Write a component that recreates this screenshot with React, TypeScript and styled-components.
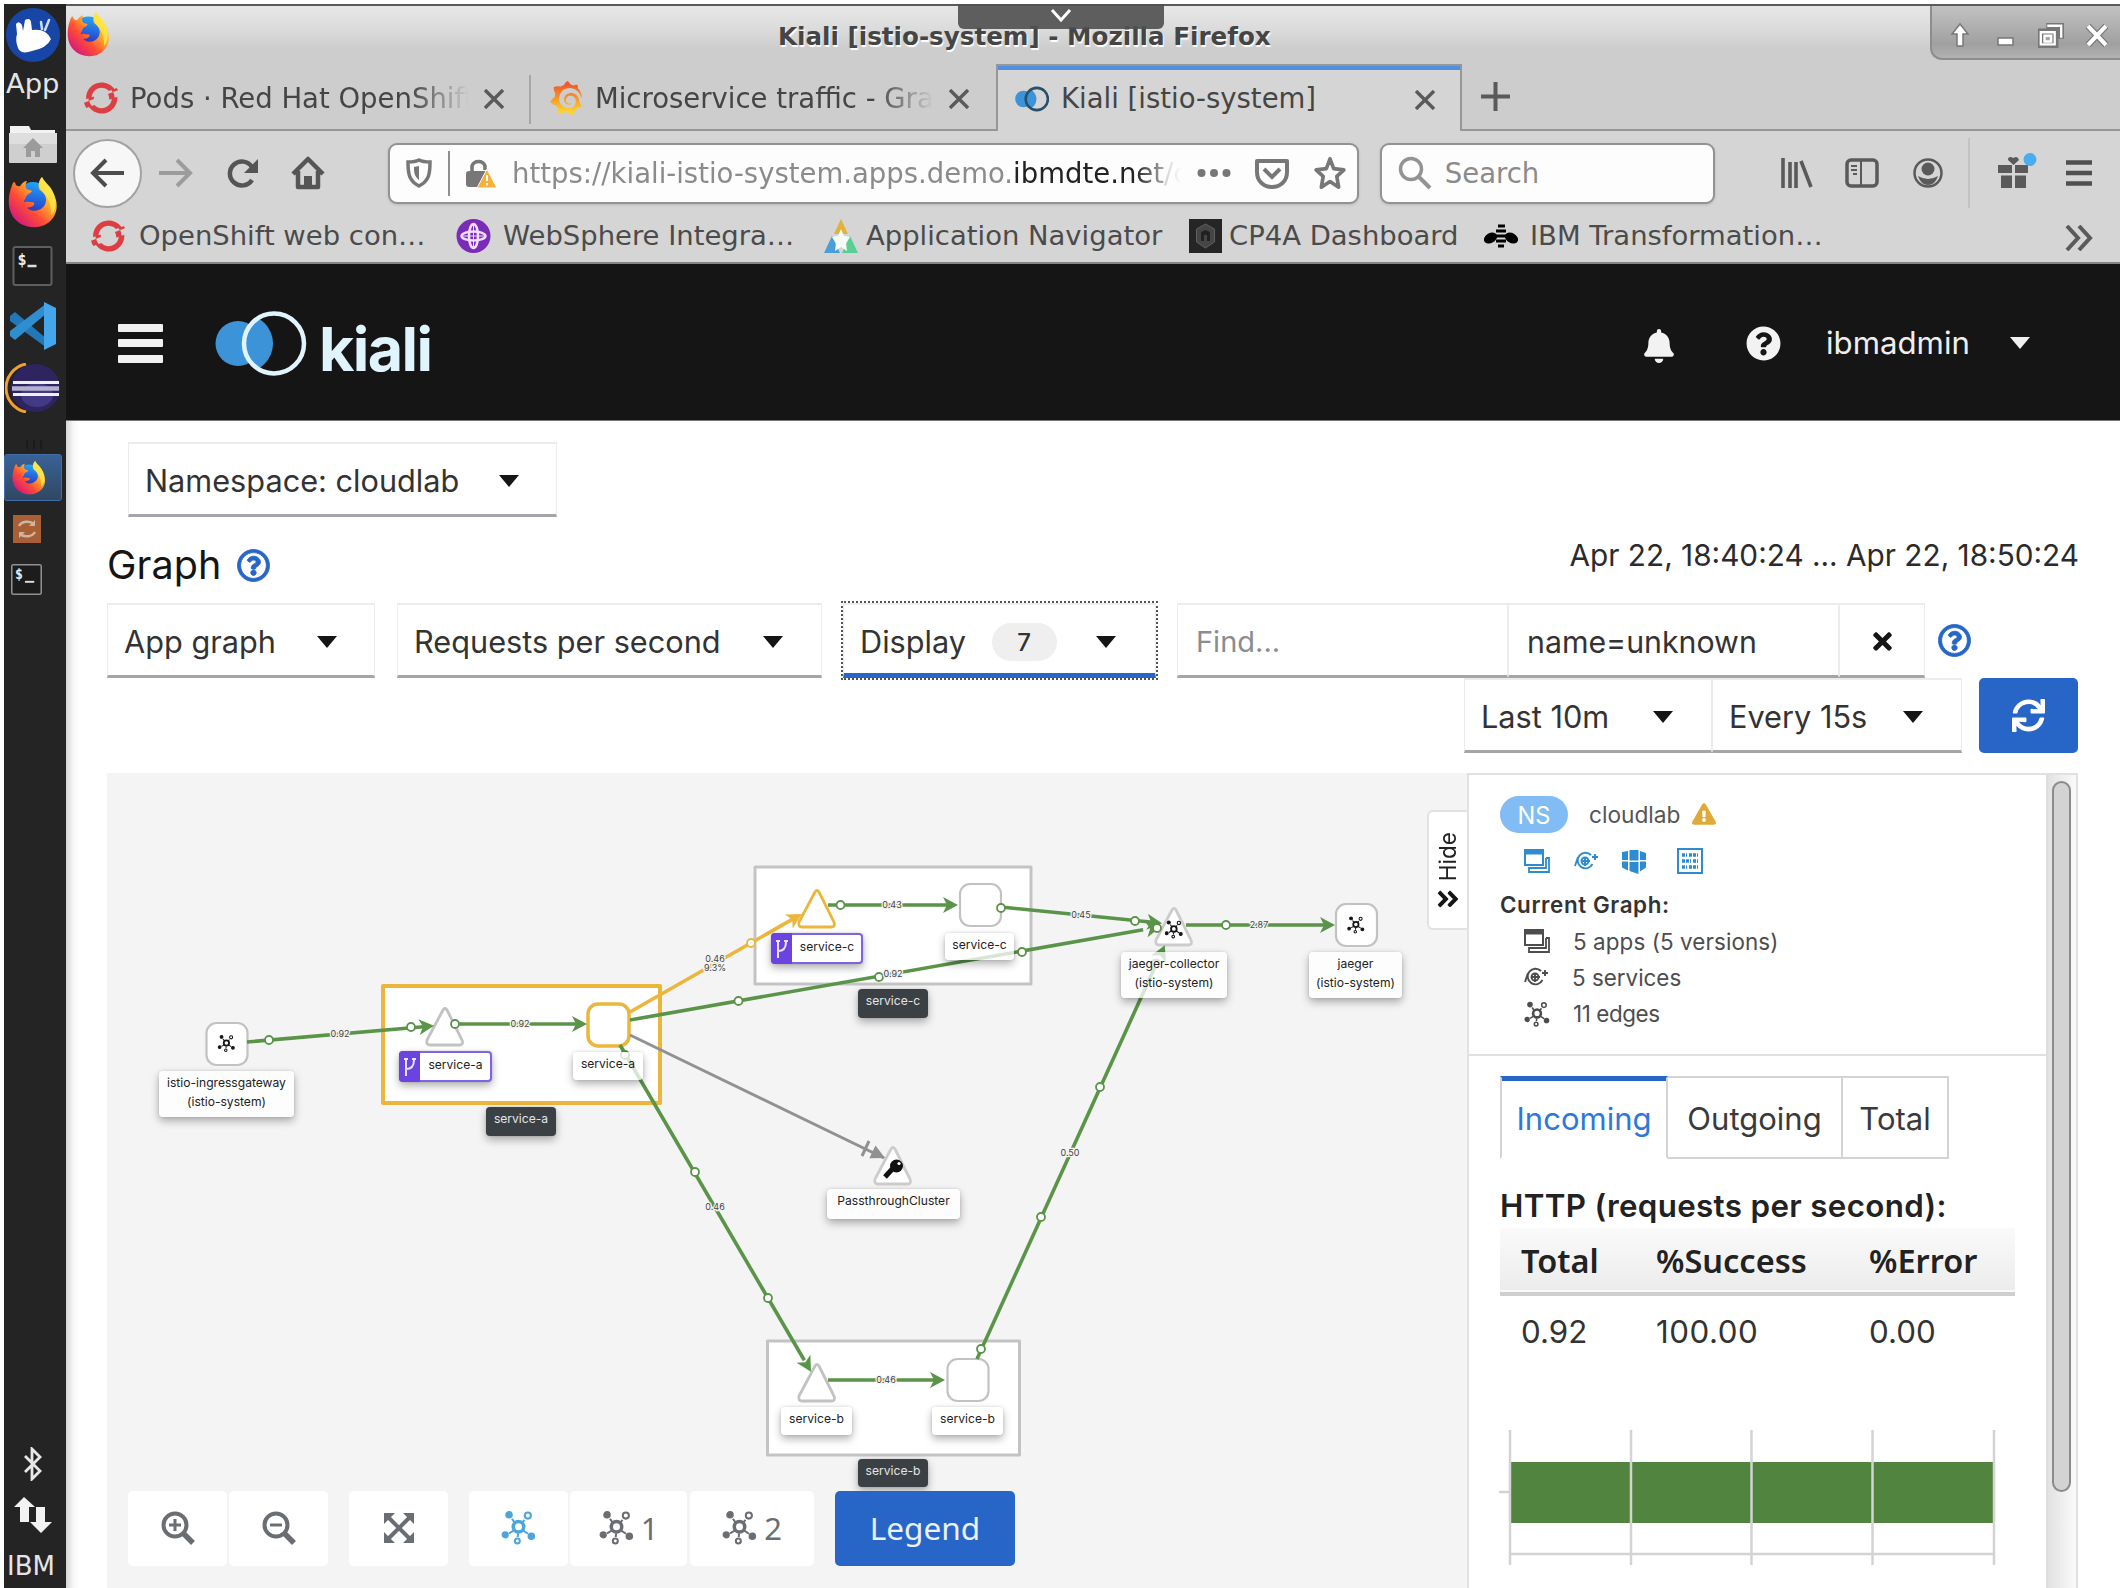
import React from "react";
import styled, { createGlobalStyle, css } from "styled-components";
import {
  FaBell, FaQuestionCircle, FaRegQuestionCircle, FaTimes, FaExclamationTriangle,
  FaAngleDoubleRight, FaSync,
} from "react-icons/fa";
import { SiRedhatopenshift, SiGrafana } from "react-icons/si";

const BROWSER_FONT = `"DejaVu Sans", "Liberation Sans", sans-serif`;
const APP_FONT = `Inter, "Noto Sans", sans-serif`;
const GREEN = "#50843f";
const GREEN_LINE = "#5a9449";
const AMBER = "#ecb53c";
const BLUE = "#2766c6";

const Global = createGlobalStyle`
  *, *::before, *::after { box-sizing: border-box; }
  body { margin: 0; background: #fff; overflow: hidden; }
  svg { display: block; flex: none; }
`;

/* ---------- desktop ---------- */
const Desktop = styled.div`
  width: 2128px; height: 1588px; padding: 4px 8px 0 4px; display: flex;
  background: #fff; overflow: hidden; font-family: ${BROWSER_FONT};
`;
const Dock = styled.nav`
  width: 62px; flex: none; background: #242424; display: flex; flex-direction: column;
  color: #e4e4e4; font-size: 27.5px;
`;
const DockItem = styled.div<{ $h: number; $gap: number; $left: number }>`
  height: ${p => p.$h}px; margin-top: ${p => p.$gap}px; padding-left: ${p => p.$left}px;
  display: flex; align-items: center; flex: none; white-space: nowrap;
`;
const ActiveTile = styled(DockItem)`
  width: 58px; border-radius: 3px; border: 1px solid #3f6ea8;
  background: linear-gradient(#3a6296, #304763);
`;
const DockSpace = styled.div`flex: 1;`;
const DockText = styled.span<{ $size: number }>`font-size: ${p => p.$size}px; line-height: 1;`;

const Window = styled.main`width: 2054px; display: flex; flex-direction: column; background: #fff;`;

/* ---------- browser chrome ---------- */
const TitleBar = styled.header`
  height: 60px; flex: none; display: flex; align-items: flex-start; position: relative;
  border-top: 2px solid #5b5b5b; background: linear-gradient(#e8e8e8, #dadada 25px, #cdcdcd 42px);
`;
const TitleIcon = styled.div`margin: 6px 0 0 1px; width: 44px;`;
const Title = styled.h1`
  margin: 16px 0 0 667px; font-size: 24.6px; line-height: 30px; font-weight: 700; color: #454545;
  text-shadow: 1px 2px 1px #fff; flex: 1; white-space: nowrap;
`;
const Controls = styled.div`
  width: 190px; height: 54px; display: flex; align-items: center; gap: 21px; padding: 5px 0 0 16px;
  background: linear-gradient(#c2c2c2, #a0a0a0 38px, #b2b2b2); border: 1px solid #8d8d8d; border-width: 0 0 2px 2px;
  border-bottom-left-radius: 12px;
`;
const Grip = styled.div`
  position: absolute; left: 892px; top: -2px; width: 206px; height: 25px; border-radius: 0 0 6px 6px;
  background: #505050e8; display: flex; justify-content: center; padding-top: 4px;
`;
const TabStrip = styled.div`
  height: 67px; flex: none; display: flex; background: #cdcdcd; box-shadow: inset 0 -2px #979797;
`;
const Tab = styled.div<{ $w: number; $pad: number; $active?: boolean; $line?: boolean }>`
  width: ${p => p.$w}px; padding-left: ${p => p.$pad}px; display: flex; align-items: center; position: relative;
  font-size: 27.5px; color: #454545; flex: none;
  ${p => p.$active && css`background: #d5d5d5; border: 2px solid #979797; border-width: 2px 2px 0 2px;
    box-shadow: inset 0 4px #4f90e0;`}
  ${p => p.$line && css`&::after { content: ""; position: absolute; right: 0; top: 11px; height: 49px; width: 2px; background: #a6a6a6; }`}
`;
const TabText = styled.span<{ $fade?: boolean; $up?: number }>`
  width: 342px; margin-left: 12px; overflow: hidden; white-space: nowrap; line-height: 36px;
  padding-bottom: ${p => p.$up || 0}px;
  ${p => p.$fade && css`mask-image: linear-gradient(90deg, #000 82%, transparent 99%);`}
`;
const TabClose = styled.span`margin-left: 12px; display: flex; padding-top: 3px;`;
const NewTab = styled.div`padding: 18px 0 0 19px;`;

const NavBar = styled.div`
  height: 84px; flex: none; display: flex; align-items: center; background: #d5d5d5; color: #5a5a5a;
`;
const BackButton = styled.div`
  width: 69px; height: 69px; margin-left: 7px; border-radius: 50%; border: 2px solid #a2a2a2; background: #f7f7f7;
  display: flex; align-items: center; justify-content: center; padding-right: 1px;
`;
const Slot = styled.div<{ $ml: number; $w: number }>`
  margin-left: ${p => p.$ml}px; width: ${p => p.$w}px; display: flex; justify-content: center; flex: none;
`;
const Field = styled.div<{ $w: number; $ml: number; $pad: number }>`
  width: ${p => p.$w}px; height: 61px; margin-left: ${p => p.$ml}px; padding-left: ${p => p.$pad}px; flex: none;
  display: flex; align-items: center; border: 2px solid #929292; border-radius: 9px; background: #fdfdfd;
  font-size: 27.5px; color: #8b8b8b; box-shadow: 0 1px 3px #0002;
`;
const Rule = styled.div<{ $h: number; $c: string; $ml: number }>`
  width: 2px; height: ${p => p.$h}px; background: ${p => p.$c}; margin-left: ${p => p.$ml}px; flex: none;
`;
const Url = styled.span`
  margin-left: 15px; width: 670px; overflow: hidden; white-space: nowrap; line-height: 40px;
  mask-image: linear-gradient(90deg, #000 93%, transparent 100%);
  b { font-weight: 400; color: #222; }
`;
const Bookmarks = styled.div`
  height: 49px; flex: none; display: flex; align-items: flex-start; padding: 2px 0 0 25px; background: #d5d5d5;
  border-bottom: 2px solid #858585; font-size: 27.45px; color: #4b4b4b;
`;
const Bookmark = styled.div<{ $w: number; $gap: number }>`
  width: ${p => p.$w}px; height: 38px; display: flex; align-items: center; gap: ${p => p.$gap}px; white-space: nowrap;
  line-height: 38px; flex: none;
`;
const Overflow = styled(Bookmark)`padding-top: 4px;`;

/* ---------- kiali ---------- */
const Masthead = styled.div`
  height: 157px; flex: none; background: #151515; display: flex; align-items: center; color: #f2f2f2;
  font-family: ${APP_FONT}; padding-top: 2px; border-bottom: 1px solid #777;
`;
const Burger = styled.div`
  width: 45px; height: 39px; margin: 0 0 0 52px; display: flex; flex-direction: column; justify-content: space-between;
  i { height: 8px; background: #f0f0f0; border-radius: 1px; }
`;
const Wordmark = styled.span`
  font: 650 61px/60px Inter, sans-serif; letter-spacing: -1.6px; color: #dff4fc; margin: 11px 0 0 12px; width: 1323px;
`;
const Bell = styled.div`padding-top: 5px;`;
const UserName = styled.span`font-size: 31.2px; margin-left: 45px; width: 184px; color: #eee;`;
const Caret = styled.i<{ $c?: string }>`
  border: 10px solid transparent; border-top: 12px solid ${p => p.$c || "#151515"}; border-bottom: 0; flex: none;
`;

const Page = styled.div`
  flex: 1; min-height: 0; padding: 21px 0 0 41px; font-family: ${APP_FONT}; color: #333;
  background: linear-gradient(90deg, #d4d4d4, #f6f6f6 7px, #fff 13px);
  display: flex; flex-direction: column;
`;
const Select = styled.div<{ $w: number; $caret: number; $focus?: boolean }>`
  width: ${p => p.$w}px; height: 75px; padding: 3px ${p => p.$caret}px 0 16px; display: flex; align-items: center; flex: none;
  justify-content: space-between; background: #fff; font-size: 30.7px; white-space: nowrap;
  border: 1px solid #ececec; border-top-width: 2px; border-bottom: 3px solid #a3a5a8; color: #333;
  ${p => p.$focus && css`border-bottom: 5px solid ${BLUE}; outline: 2px dotted #555; padding-top: 5px;`}
`;
const Caption = styled.div`display: flex; justify-content: space-between; height: 86px; padding-right: 41px;`;
const Heading = styled.h2`
  margin: 25px 0 0 0; font-size: 39.5px; font-weight: 400; color: #151515; display: flex; gap: 15px;
  align-items: center; height: 46px; letter-spacing: .1px;
`;
const Range = styled.div`font-size: 29.75px; line-height: 36px; margin-top: 20px; color: #2b2b2b;`;
const Row = styled.div<{ $ml?: number; $mt?: number }>`
  display: flex; align-items: center; flex: none; margin-left: ${p => p.$ml || 0}px; margin-top: ${p => p.$mt || 0}px;
`;
const Count = styled.span`
  width: 65px; height: 38px; border-radius: 19px; background: #efefef; font-size: 24px; font-weight: 500;
  display: flex; align-items: center; justify-content: center; margin: 1px 14px 0 0;
`;
const Input = styled.div<{ $w: number; $muted?: boolean }>`
  width: ${p => p.$w}px; height: 75px; padding: 3px 0 0 18px; display: flex; align-items: center; background: #fff;
  font-size: ${p => (p.$muted ? 29 : 30.3)}px; color: ${p => (p.$muted ? "#8a8d90" : "#333")};
  border: 1px solid #ececec; border-top-width: 2px; border-bottom: 3px solid #a3a5a8; flex: none;
`;
const ClearBtn = styled(Input)`padding: 2px 0 0 1px; justify-content: center; color: #151515;`;
const Refresh = styled.div`
  width: 99px; height: 75px; background: ${BLUE}; border-radius: 5px; margin-left: 17px; color: #fff;
  display: flex; align-items: center; justify-content: center;
`;
const Workspace = styled.div`margin-top: 20px; flex: 1; min-height: 0; display: flex; width: 1971px;`;

const Canvas = styled.section`
  width: 1360px; flex: none; position: relative; background: #f4f4f4; display: flex; align-items: flex-end;
  overflow: hidden;
`;
const Drawing = styled.svg`position: absolute; left: 0; top: 0; text { font-family: ${APP_FONT}; }`;
const Label = styled.div<{ $x: number; $y: number; $w: number; $h: number; $dark?: boolean; $route?: boolean }>`
  position: absolute; left: ${p => p.$x - 107}px; top: ${p => p.$y - 773}px; width: ${p => p.$w}px; height: ${p => p.$h}px;
  background: ${p => (p.$dark ? "#3b4045" : "rgba(255,255,255,.76)")}; color: ${p => (p.$dark ? "#e3e5e6" : "#222")};
  border-radius: 4px; box-shadow: 0 4px 8px rgba(0,0,0,.3), 0 0 3px rgba(0,0,0,.12);
  font-size: 12.1px; line-height: 19px; padding-top: 2px; text-align: center; white-space: pre-line;
  ${p => p.$route && css`border: 2px solid #7e62e8; background: #fff; padding: 2px 0 0 20px;`}
`;
const RouteBadge = styled.span`
  position: absolute; left: -2px; top: -2px; bottom: -2px; width: 21px; background: #6a43e0; border-radius: 4px 0 0 4px;
  display: flex; align-items: center; justify-content: center;
`;
const GraphTools = styled.div`position: relative; display: flex; padding: 0 0 21px 21px; height: 97px;`;
const Tool = styled.div<{ $w: number; $ml: number }>`
  width: ${p => p.$w}px; margin-left: ${p => p.$ml}px; height: 75px; background: #fff; border-radius: 5px; color: #6a6e73;
  display: flex; align-items: center; justify-content: center; gap: 7px; font: 31px/40px "Noto Sans", sans-serif;
  padding-bottom: 2px;
`;
const LegendBtn = styled(Tool)`background: ${BLUE}; color: #e9f1fb; font-size: 31.6px;`;

const HideTab = styled.div`
  position: absolute; right: 0; top: 37px; width: 40px; height: 120px; background: #fff; border: 2px solid #e2e2e2;
  border-right: 0; border-radius: 6px 0 0 6px; display: flex; flex-direction: column; align-items: center;
  padding-top: 20px; gap: 5px; color: #151515;
`;
const HideText = styled.span`
  writing-mode: vertical-rl; transform: rotate(180deg); font-size: 22.6px; color: #222; line-height: 30px;
`;

const Side = styled.aside`width: 611px; display: flex; border: 2px solid #e1e1e1; border-bottom: 0; background: #fff;`;
const SideBody = styled.div`flex: 1; overflow: hidden;`;
const Track = styled.div`
  width: 30px; background: linear-gradient(90deg, #e2e2e2, #fafafa); border-left: 2px solid #dedede; padding: 6px 0 0 4px;
`;
const Thumb = styled.div`width: 19px; height: 711px; border-radius: 10px; background: #d3d3d3; border: 2px solid #8b8b8b;`;
const Summary = styled.div`height: 281px; border-bottom: 2px solid #e1e1e1; padding: 20px 0 0 30px; color: #555;`;
const NsRow = styled.div`
  display: flex; align-items: center; height: 37px; font-size: 22.7px; padding: 1px 0 0 1px;
  > svg { margin-left: 11px; }
`;
const Pill = styled.span`
  width: 68px; height: 37px; border-radius: 19px; background: #81bcf4; color: #fff; font-size: 23.6px; line-height: 39px;
  text-align: center; margin-right: 21px;
`;
const Links = styled.div`
  display: flex; align-items: center; height: 26px; margin: 16px 0 0 25px; color: #2f8bd0;
  svg:nth-child(2) { margin-left: 24px; } svg:nth-child(3) { margin-left: 22px; } svg:nth-child(4) { margin-left: 30px; }
`;
const Strong = styled.div`
  font-size: 22.4px; font-weight: 600; letter-spacing: .6px; color: #333; line-height: 30px; margin: 16px 0 0 1px;
`;
const Stat = styled.div<{ $h: number; $ls?: number }>`
  height: ${p => p.$h}px; margin-left: 25px; display: flex; align-items: center; gap: 23px; font-size: 22.4px;
  letter-spacing: ${p => p.$ls || 0}px; color: #4d4d4d;
`;
const TabRow = styled.div`display: flex; margin: 20px 0 0 31px; height: 83px;`;
const PanelTab = styled.div<{ $w: number; $on?: boolean }>`
  width: ${p => p.$w}px; border: 2px solid #d4d4d4; border-left-width: ${p => (p.$on ? 2 : 0)}px; font-size: 31px;
  display: flex; align-items: center; justify-content: center; padding-top: 2px; color: #3a3a3a;
  ${p => p.$on && css`color: #2f78d8; border-bottom-color: transparent; box-shadow: inset 0 3px ${BLUE}; border-top-color: ${BLUE};`}
`;
const HttpTitle = styled.div`
  margin: 28px 0 0 31px; font-size: 31.3px; letter-spacing: .35px; font-weight: 600; line-height: 38px; color: #222;
`;
const Table = styled.table`
  margin: 3px 0 0 31px; width: 515px; border-collapse: collapse; table-layout: fixed;
  th { height: 66px; padding: 0 0 0 21px; text-align: left; font: 600 32.5px "Noto Sans", sans-serif; color: #222; }
  thead tr { background: linear-gradient(#fafafa, #ececec); border-bottom: 4px solid #cfcfcf; }
  td { padding: 17px 0 0 21px; font-size: 31.3px; line-height: 38px; color: #333; }
  td:nth-child(2) { letter-spacing: .5px; }
`;

/* ---------- icons ---------- */
const FirefoxIcon = ({ w, h }: { w: number; h: number }) => (
  <svg width={w} height={h} viewBox="0 0 50 50" preserveAspectRatio="none">
    <defs>
      <linearGradient id="fx" x1=".9" y1=".1" x2=".15" y2=".9">
        <stop offset="0" stopColor="#fff04d" /><stop offset=".38" stopColor="#ffa229" />
        <stop offset=".65" stopColor="#ff4b36" /><stop offset="1" stopColor="#d3187f" />
      </linearGradient>
      <linearGradient id="fb" x1=".6" y1="0" x2=".4" y2="1">
        <stop offset="0" stopColor="#23a6f5" /><stop offset=".6" stopColor="#2458d8" /><stop offset="1" stopColor="#45208c" />
      </linearGradient>
    </defs>
    <circle cx="25" cy="22" r="17" fill="url(#fb)" />
    <path d="M4 8 C6 3 7 5 8 8 C10 9 11 9 12 9 C15 5 17 4 19 4 C17 7 17 10 19 12 C21 13 24 13 24 14 C23 16 19 17 18 19 C18 22 15 23 16 25 C19 23 22 25 26 25 C27 28 23 30 19 30 C23 35 33 34 37 27 C40 20 36 15 32 13 C29 9 31 3 34 0 C36 5 42 8 45 15 C51 26 50 38 40 45 C28 53 12 49 5 39 C-1 30 0 18 4 8Z" fill="url(#fx)" />
    <path d="M34 0 C36 5 42 8 45 15 C49 24 48 33 43 38 C44 28 40 20 34 14 C30 9 31 3 34 0Z" fill="#fde94a" opacity=".8" />
  </svg>
);
const XubuntuIcon = () => (
  <svg width="54" height="54" viewBox="0 0 54 54">
    <circle cx="27" cy="27" r="27" fill="#1846a6" />
    <path d="M11 26 L10 16 Q13 12 16 17 L17 23 L19 12 Q24 9 25 14 L26 22 Q40 20 45 31 Q41 40 26 43 Q15 47 12 40 Q9 32 11 26Z" fill="#fff" />
    <path d="M36 21 L35 14 M39 22 L43 12" stroke="#cfe0ff" strokeWidth="2.5" fill="none" strokeLinecap="round" />
  </svg>
);
const FolderIcon = () => (
  <svg width="48" height="38" viewBox="0 0 48 38">
    <path d="M1 1h19l2 4h24v5H1z" fill="#f2f2f2" /><rect y="8" width="48" height="30" rx="1" fill="#cfcfcf" />
    <rect y="8" width="48" height="11" fill="#dedede" />
    <path d="M24 13l10 10h-3v9h-5v-6h-4v6h-5v-9h-3z" fill="#9b9b9b" />
  </svg>
);
const Terminal = ({ w, h, edge, size, dx }: { w: number; h: number; edge: string; size: number; dx: number }) => (
  <svg width={w} height={h} viewBox="0 0 40 40">
    <rect x="1" y="1" width="38" height="38" rx="2" fill="#1c1c1c" stroke={edge} strokeWidth="2" />
    <text x="5" y="19" fontFamily="DejaVu Sans Mono, monospace" fontWeight="700" fontSize={size} fill="#eee">$</text>
    <path d={`M${15 + dx} ${20 + dx}h${9 + dx}`} stroke="#ddd" strokeWidth="2.5" />
  </svg>
);
const VsCode = () => (
  <svg width="48" height="48" viewBox="0 0 48 48">
    <path d="M1 14 6 10 38 37v9L1 19z" fill="#2277b8" /><path d="M1 34 6 38 38 11V1L1 29z" fill="#2f8ed0" />
    <path d="M35 0 47 6v36L35 48z" fill="#46a6ec" />
  </svg>
);
const Eclipse = () => (
  <svg width="56" height="50" viewBox="0 0 56 50">
    <path d="M21 1A25 24.500 0 0 0 21 49" fill="none" stroke="#f0a030" strokeWidth="3" />
    <ellipse cx="30.500" cy="25" rx="24.500" ry="24" fill="#2e2460" /><ellipse cx="32" cy="32" rx="16" ry="12" fill="#433a86" />
    <path d="M8 19.500h46M8 31.500h46" stroke="#f0f0f4" strokeWidth="3.200" /><path d="M7 25.500h47" stroke="#b5afd0" strokeWidth="4.500" />
  </svg>
);
const Handle = () => (
  <svg width="16" height="10" viewBox="0 0 16 10"><path d="M1 0v9M8 0v9M15 0v9" stroke="#1b1b1b" strokeWidth="2" /></svg>
);
const SyncTile = () => (
  <svg width="28" height="28" viewBox="0 0 28 28">
    <rect width="28" height="28" fill="#a85f35" />
    <path d="M6 11a9 7 0 0 1 15-2M22 17a9 7 0 0 1-15 2" stroke="#cdb5a5" strokeWidth="2.500" fill="none" />
    <path d="M22 5v6h-6zM6 23v-6h6z" fill="#cdb5a5" />
  </svg>
);
const Bluetooth = () => (
  <svg width="20" height="34" viewBox="0 0 20 34">
    <path d="M2 9l15 15-8 8V2l8 8L2 25" stroke="#e8e8e8" strokeWidth="2.800" fill="none" />
  </svg>
);
const UpDown = () => (
  <svg width="38" height="36" viewBox="0 0 38 36">
    <path d="M10 0l11 10h-6v15H6V10H0zM27 36L16 25h6V10h9v15h7z" fill="#f2f2f2" />
  </svg>
);
const Cross = () => (
  <svg width="20" height="20" viewBox="0 0 20 20"><path d="M1 1l18 18M19 1L1 19" stroke="#5a5a5a" strokeWidth="3.400" /></svg>
);
const KialiMark = ({ w, h, ring, t = 4.5 }: { w: number; h: number; ring: string; t?: number }) => (
  <svg width={w} height={h} viewBox="0 0 92 65">
    <defs><clipPath id="kr"><circle cx="59" cy="32.500" r="30" /></clipPath></defs>
    <circle cx="23" cy="32.500" r="22.500" fill="#3c93d8" />
    <circle cx="29" cy="32.500" r="29" fill="#3c93d8" clipPath="url(#kr)" />
    <circle cx="59" cy="32.500" r="30" fill="none" stroke={ring} strokeWidth={t} />
  </svg>
);
const TopologyShape = ({ c }: { c: string }) => (
  <g fill="none" stroke={c} strokeWidth="1.400">
    <path d="M9.600 9L7.500 6M14 9l2.200-2.200M9 14l-3.500 2M15 14l3.500 2.300M11.700 16l-.2 2.500" />
    <circle cx="12" cy="11.500" r="3.600" strokeWidth="2.400" />
    <circle cx="18.400" cy="3.800" r="2.100" /><circle cx="11.200" cy="21.300" r="1.700" />
    <g fill={c}><circle cx="5.500" cy="3.300" r="1.900" /><circle cx="2.900" cy="17" r="1.800" /><circle cx="20.800" cy="18" r="1.900" /></g>
  </g>
);
const Topology = ({ s, c = "currentColor" }: { s: number; c?: string }) => (
  <svg width={s} height={s} viewBox="0 0 24 24"><TopologyShape c={c} /></svg>
);
const Windows = () => (
  <svg width="26" height="26" viewBox="0 0 26 26" fill="none" stroke="currentColor" strokeWidth="2">
    <rect x="1" y="2" width="18" height="15" /><path d="M1 4h18" strokeWidth="5" /><path d="M22 10h3v14H5v-4h17V10" strokeWidth="1.800" />
  </svg>
);
const ServiceIcon = () => (
  <svg width="25" height="20" viewBox="0 0 25 20" fill="none" stroke="currentColor" strokeWidth="1.900">
    <path d="M17 4a7.800 7.800 0 1 0 1.500 9M1 15l3-9M11 6v9M8 10h8M18 6h6M21 3v6" />
    <circle cx="11" cy="10" r="3.500" />
  </svg>
);
const Bundle = () => (
  <svg width="26" height="25" viewBox="0 0 26 25" fill="currentColor">
    <path d="M1 3l6-1v9H1zM8.500 1h9v10.500h-9zM19 2l6 2v7h-6zM1 12.500h6v9l-6-3zM8.500 13h9v12l-9-3zM19 12.500h6v6l-6 4z" />
  </svg>
);
const Registry = () => (
  <svg width="26" height="26" viewBox="0 0 26 26" fill="none" stroke="currentColor" strokeWidth="2">
    <rect x="1" y="1" width="24" height="24" /><path d="M5 7h5M12 7h9M5 13h9M16 13h5M5 19h5M12 19h9" strokeWidth="3.500" strokeDasharray="3 1" />
  </svg>
);
const Zoom = ({ plus }: { plus?: boolean }) => (
  <svg width="34" height="34" viewBox="0 0 34 34" fill="none" stroke="currentColor">
    <circle cx="14" cy="14" r="11.500" strokeWidth="4" /><path d="M22 22l10 10" strokeWidth="5.500" />
    <path d={plus ? "M8 14h12M14 8v12" : "M8 14h12"} strokeWidth="3" />
  </svg>
);
const Expand = () => (
  <svg width="30" height="30" viewBox="0 0 30 30" fill="currentColor" stroke="currentColor">
    <path d="M5 5l20 20M25 5L5 25" strokeWidth="4" />
    <path d="M0 0h11L0 11zM30 0v11L19 0zM0 30V19l11 11zM30 30H19l11-11z" strokeWidth="0" />
  </svg>
);
const HelpIcon = styled(FaRegQuestionCircle)`overflow: visible; color: ${BLUE};`;
const Help = () => <HelpIcon size={33} strokeWidth={14} />;

/* ---------- graph data ---------- */
type Edge = { p: [number, number, number, number]; dots?: [number, number][]; label?: [number, number, string]; color?: string };
const edges: Edge[] = [
  { p: [247, 1042, 432, 1026], dots: [[269, 1040], [411, 1027]], label: [340, 1034, "0.92"] },
  { p: [457, 1024, 585, 1024], dots: [[455, 1024]], label: [520, 1024, "0.92"] },
  { p: [630, 1012, 800, 915], dots: [[751, 943]], color: AMBER },
  { p: [828, 905, 956, 905], dots: [[840.5, 905]], label: [892, 905, "0.43"] },
  { p: [1001, 907, 1160, 923], dots: [[1001, 908], [1135, 921]], label: [1081, 915, "0.45"] },
  { p: [630, 1020, 1159, 927], dots: [[738.5, 1001], [879, 977], [1022, 952], [1157, 928]], label: [893, 974, "0.92"] },
  { p: [1186, 925, 1333, 925], dots: [[1226, 925]], label: [1259, 925, "2.87"] },
  { p: [620, 1045, 810, 1370], dots: [[625, 1055], [695, 1172], [768, 1298]], label: [715, 1207, "0.46"] },
  { p: [828, 1380, 943, 1380], label: [886, 1380, "0.46"] },
  { p: [977, 1359, 1164, 947], dots: [[981, 1349], [1041, 1217], [1100, 1087], [1155, 964]], label: [1070, 1153, "0.50"] },
];
const triangles: [number, number, string][] = [[445, 1008, "#c2c2c2"], [817, 890, AMBER], [1174, 908, "#cccccc"], [893, 1147, "#cccccc"], [817, 1364, "#c2c2c2"]];
const squares: [number, number, string][] = [[226.5, 1044, "#c2c2c2"], [608, 1025, AMBER], [980, 905, "#c2c2c2"], [1356, 925, "#c2c2c2"], [967.5, 1380, "#c2c2c2"]];
const labels: { x: number; y: number; w: number; h: number; t: string; dark?: boolean; route?: boolean }[] = [
  { x: 159, y: 1071, w: 135, h: 46, t: "istio-ingressgateway\n(istio-system)" },
  { x: 399, y: 1051, w: 93, h: 31, t: "service-a", route: true },
  { x: 573, y: 1052, w: 70, h: 28, t: "service-a" },
  { x: 486, y: 1107, w: 70, h: 29, t: "service-a", dark: true },
  { x: 771, y: 933, w: 92, h: 31, t: "service-c", route: true },
  { x: 945, y: 933, w: 69, h: 27, t: "service-c" },
  { x: 858, y: 989, w: 70, h: 29, t: "service-c", dark: true },
  { x: 1121, y: 952, w: 106, h: 46, t: "jaeger-collector\n(istio-system)" },
  { x: 1309, y: 952, w: 93, h: 46, t: "jaeger\n(istio-system)" },
  { x: 827, y: 1189, w: 133, h: 30, t: "PassthroughCluster" },
  { x: 781, y: 1407, w: 71, h: 28, t: "service-b" },
  { x: 932, y: 1407, w: 71, h: 28, t: "service-b" },
  { x: 858, y: 1459, w: 70, h: 28, t: "service-b", dark: true },
];

const Arrow = ({ p, c }: { p: Edge["p"]; c: string }) => {
  const a = (Math.atan2(p[3] - p[1], p[2] - p[0]) * 180) / Math.PI;
  return <path transform={`translate(${p[2]} ${p[3]}) rotate(${a})`} d="M2 0L-13 -8L-9 0L-13 8Z" fill={c} />;
};
const EdgeText = ({ x, y, t }: { x: number; y: number; t: string }) => (
  <text x={x} y={y + 3.2} fontSize="9" textAnchor="middle" fill="#444" stroke="#f4f4f4" strokeWidth="2.500" paintOrder="stroke">{t}</text>
);

const Graph = () => (
  <Drawing width="1360" height="815" viewBox="107 773 1360 815">
    <g fill="#fff" strokeLinejoin="round">
      <rect x="383" y="986" width="277" height="117" stroke={AMBER} strokeWidth="4" />
      <rect x="755" y="867" width="276" height="117" stroke="#c3c3c3" strokeWidth="3" />
      <rect x="767.500" y="1341" width="252" height="114" stroke="#c3c3c3" strokeWidth="3" />
    </g>
    {triangles.map(([x, y, c]) => (
      <path key={`${x}${y}`} d={`M${x - 2} ${y + 2}q2-3 4 0l15 30q2 5-3 5h-29q-4 0-3-5z`} fill="#fff" stroke={c} strokeWidth="2.800" />
    ))}
    {squares.map(([x, y, c]) => (
      <rect key={`${x}${y}`} x={x - 20} y={y - 21} width="41" height="42" rx="10" fill="#fff" stroke={c} strokeWidth={c === AMBER ? 3.5 : 2.2} />
    ))}
    <path d="M630 1035L884 1158" stroke="#8f9193" strokeWidth="3" />
    <path d="M869 1141L862 1156" stroke="#8f9193" strokeWidth="3" />
    <path transform="translate(885 1158) rotate(26)" d="M0 0L-14 -7V7Z" fill="#8f9193" />
    {edges.map((e, i) => {
      const c = e.color || GREEN_LINE;
      return (
        <g key={i}>
          <path d={`M${e.p[0]} ${e.p[1]}L${e.p[2] - (e.p[2] - e.p[0]) * 0.03} ${e.p[3] - (e.p[3] - e.p[1]) * 0.03}`} stroke={c} strokeWidth="3.600" />
          <Arrow p={e.p} c={c} />
          {e.dots?.map(([x, y]) => <circle key={x} cx={x} cy={y} r="4" fill="#fff" stroke={c} strokeWidth="1.800" />)}
          {e.label && <EdgeText x={e.label[0]} y={e.label[1]} t={e.label[2]} />}
        </g>
      );
    })}
    <EdgeText x={715} y={959} t="0.46" /><EdgeText x={715} y={968} t="9.3%" />
    <g transform="translate(217.500 1034.500) scale(.74)"><TopologyShape c="#151515" /></g>
    <g transform="translate(1164.500 920) scale(.78)"><TopologyShape c="#151515" /></g>
    <g transform="translate(1347 916) scale(.74)"><TopologyShape c="#151515" /></g>
    <g>
      <path d="M885 1177l10-11" stroke="#111" strokeWidth="5" /><circle cx="896.500" cy="1166" r="6.500" fill="#111" />
      <circle cx="899" cy="1163.500" r="1.600" fill="#fff" />
    </g>
  </Drawing>
);

const BarChart = () => (
  <svg width="540" height="175" viewBox="1499 1413 540 175">
    <rect x="1511" y="1462" width="482" height="61" fill={GREEN} />
    <g stroke="#d3d3d3" strokeWidth="2.500">
      {[1510, 1631, 1751.5, 1872.5, 1994].map(x => <path key={x} d={`M${x} 1430V1565`} />)}
      <path d="M1510 1554H1994M1499 1492H1509" />
    </g>
  </svg>
);

const Logo = styled.span`display: flex; flex: none;`;
const GrafanaLogo = () => (
  <Logo>
    <svg width="0" height="0"><defs><linearGradient id="graf" x1="0" y1="0" x2="0" y2="1"><stop offset=".1" stopColor="#f0592b" /><stop offset=".9" stopColor="#fcd32c" /></linearGradient></defs></svg>
    <SiGrafana size={34} style={{ fill: "url(#graf)" }} />
  </Logo>
);

export default function App() {
  return (
    <>
      <Global />
      <Desktop>
        <Dock>
          <DockItem $h={54} $gap={4} $left={2}><XubuntuIcon /></DockItem>
          <DockItem $h={36} $gap={4} $left={2}><DockText $size={27.4}>App</DockText></DockItem>
          <DockItem $h={38} $gap={23} $left={5}><FolderIcon /></DockItem>
          <DockItem $h={51} $gap={14} $left={4}><FirefoxIcon w={50} h={51} /></DockItem>
          <DockItem $h={40} $gap={18} $left={8}><Terminal w={41} h={40} edge="#5e5e5e" size={15} dx={0} /></DockItem>
          <DockItem $h={48} $gap={16} $left={5}><VsCode /></DockItem>
          <DockItem $h={50} $gap={13} $left={1}><Eclipse /></DockItem>
          <DockItem $h={10} $gap={27} $left={22}><Handle /></DockItem>
          <ActiveTile $h={47} $gap={4} $left={7}><FirefoxIcon w={34} h={34} /></ActiveTile>
          <DockItem $h={27} $gap={14} $left={9}><SyncTile /></DockItem>
          <DockItem $h={31} $gap={22} $left={7}><Terminal w={31} h={31} edge="#909090" size={17} dx={3} /></DockItem>
          <DockSpace />
          <DockItem $h={34} $gap={0} $left={19}><Bluetooth /></DockItem>
          <DockItem $h={36} $gap={16} $left={10}><UpDown /></DockItem>
          <DockItem $h={36} $gap={15} $left={3}><DockText $size={26}>IBM</DockText></DockItem>
          <DockItem $h={4} $gap={0} $left={0} />
        </Dock>
        <Window>
          <TitleBar>
            <TitleIcon><FirefoxIcon w={43} h={45} /></TitleIcon>
            <Title>Kiali [istio-system] - Mozilla Firefox</Title>
            <Controls>
              <svg width="24" height="28" viewBox="0 0 24 28"><path d="M12 3l8 10h-5v12H9V13H4z" fill="#fff" stroke="#777" strokeWidth="1.500" /></svg>
              <svg width="24" height="28" viewBox="0 0 24 28"><path d="M5 17h15v7H5z" fill="#fff" stroke="#777" strokeWidth="1.500" /></svg>
              <svg width="26" height="28" viewBox="0 0 28 28" fill="none"><path d="M9 4h16v14M3 10h16v15H3z" stroke="#777" strokeWidth="6" /><path d="M10 4h15v13M3 11h15v13H3zM7 15v6h7v-6z" stroke="#fff" strokeWidth="2.500" /></svg>
              <svg width="24" height="28" viewBox="0 0 24 28"><path d="M3 5l18 19M21 5L3 24" stroke="#777" strokeWidth="6.500" /><path d="M3 5l18 19M21 5L3 24" stroke="#fff" strokeWidth="4" /></svg>
            </Controls>
            <Grip><svg width="22" height="15" viewBox="0 0 22 15"><path d="M2 2l9 10 9-10" stroke="#fff" strokeWidth="3" fill="none" /></svg></Grip>
          </TitleBar>
          <TabStrip>
            <Tab $w={465} $pad={18} $line>
              <SiRedhatopenshift size={34} color="#dc3e42" />
              <TabText $fade>Pods · Red Hat OpenShift</TabText><TabClose><Cross /></TabClose>
            </Tab>
            <Tab $w={465} $pad={18}>
              <GrafanaLogo />
              <TabText $fade>Microservice traffic - Grafana</TabText><TabClose><Cross /></TabClose>
            </Tab>
            <Tab $w={466} $pad={17} $active>
              <KialiMark w={34} h={28} ring="#29506b" t={7} />
              <TabText $up={2}>Kiali [istio-system]</TabText><TabClose><Cross /></TabClose>
            </Tab>
            <NewTab><svg width="29" height="29" viewBox="0 0 29 29"><path d="M0 14.500h29M14.500 0v29" stroke="#5a5a5a" strokeWidth="4" /></svg></NewTab>
          </TabStrip>
          <NavBar>
            <BackButton><svg width="34" height="30" viewBox="0 0 34 30"><path d="M34 15H3M16 2L3 15l13 13" stroke="#4d4d4d" strokeWidth="4" fill="none" /></svg></BackButton>
            <Slot $ml={17} $w={34}><svg width="34" height="30" viewBox="0 0 34 30"><path d="M0 15h31M18 2l13 13-13 13" stroke="#9c9c9c" strokeWidth="4" fill="none" /></svg></Slot>
            <Slot $ml={34} $w={32}><svg width="32" height="31" viewBox="0 0 32 31"><path d="M25 22A12 12 0 1 1 25 9" stroke="#555" strokeWidth="4.500" fill="none" /><path d="M31 1v14H17z" fill="#555" /></svg></Slot>
            <Slot $ml={32} $w={34}>
              <svg width="34" height="34" viewBox="0 0 34 34"><path d="M2 18L17 3l15 15M7 15v16h20V15" stroke="#555" strokeWidth="4.500" fill="none" strokeLinejoin="round" /><path d="M13 20h8v12h-8z" fill="#555" /></svg>
            </Slot>
            <Field $w={971} $ml={63} $pad={16}>
              <svg width="26" height="30" viewBox="0 0 26 30"><path d="M13 2c4 2 7 2 11 2 0 12-1 19-11 24C3 23 2 16 2 4c4 0 7 0 11-2z" fill="none" stroke="#777" strokeWidth="3.500" /><path d="M13 8v14c-5-4-5-8-5-13z" fill="#777" /></svg>
              <Rule $h={45} $c="#8f8f8f" $ml={16} />
              <Slot $ml={16} $w={31}>
                <svg width="31" height="32" viewBox="0 0 31 32"><path d="M6 15V9a7 7 0 0 1 13 0v4" fill="none" stroke="#777" strokeWidth="3.500" /><rect y="14" width="21" height="16" rx="3" fill="#777" /><path d="M21 12L31 31H11z" fill="#f5b13a" stroke="#fdfdfd" strokeWidth="1" /><path d="M21 18v6M21 26v2.500" stroke="#fff" strokeWidth="2" /></svg>
              </Slot>
              <Url>https://kiali-istio-system.apps.demo.<b>ibmdte.net</b>/console</Url>
              <Slot $ml={15} $w={34}><svg width="34" height="10" viewBox="0 0 34 10" fill="#777"><circle cx="4.500" cy="5" r="4" /><circle cx="17" cy="5" r="4" /><circle cx="29.500" cy="5" r="4" /></svg></Slot>
              <Slot $ml={24} $w={34}><svg width="34" height="31" viewBox="0 0 34 31" fill="none" stroke="#777" strokeWidth="4"><path d="M2 3h30v11c0 20-30 20-30 0z" strokeLinejoin="round" /><path d="M9 11l8 8 8-8" /></svg></Slot>
              <Slot $ml={24} $w={34}><svg width="34" height="34" viewBox="0 0 24 24" fill="none" stroke="#777" strokeWidth="2.600"><path d="M12 2l2.600 6.900 7.200.9-5 4.600 1.300 7.600-6.100-4-6.100 4 1.300-7.600-5-4.600 7.200-.9z" strokeLinejoin="round" /></svg></Slot>
            </Field>
            <Field $w={335} $ml={21} $pad={16}>
              <svg width="34" height="34" viewBox="0 0 34 34" fill="none" stroke="#939393"><circle cx="13" cy="13" r="10.500" strokeWidth="3.500" /><path d="M20 20l12 12" strokeWidth="4" /></svg>
              <Slot $ml={10} $w={100}>Search</Slot>
            </Field>
            <Slot $ml={66} $w={32}><svg width="32" height="30" viewBox="0 0 32 30" stroke="#5a5a5a" strokeWidth="3.600"><path d="M2 0v30M9 4v26M15 4v26M20 3l10 26" /></svg></Slot>
            <Slot $ml={32} $w={34}><svg width="34" height="30" viewBox="0 0 34 30" fill="none" stroke="#5a5a5a" strokeWidth="3.500"><rect x="2" y="2" width="30" height="26" rx="4" /><path d="M16 2v26" strokeWidth="2" /><path d="M6 8h6M6 12h6M8 16h4" strokeWidth="2" /></svg></Slot>
            <Slot $ml={34} $w={30}><svg width="30" height="30" viewBox="0 0 30 30"><circle cx="15" cy="15" r="13.500" fill="none" stroke="#5a5a5a" strokeWidth="2.500" /><circle cx="15" cy="11" r="6.500" fill="#5a5a5a" /><path d="M5 18q10 6 20 0-3 9-10 9T5 18z" fill="#5a5a5a" /></svg></Slot>
            <Rule $h={70} $c="#c3c3c3" $ml={25} />
            <Slot $ml={28} $w={42}>
              <svg width="42" height="40" viewBox="0 0 42 40" fill="#5a5a5a"><path d="M0 12h14v8H0zM17 12h13v8H17zM3 22.500h11V35H3zM17 22.500h11V35H17zM15.500 12L10 7q0-5 5.500-2 4-3 5.500 2z" /><circle cx="32" cy="6.500" r="6.500" fill="#4aacec" /></svg>
            </Slot>
            <Slot $ml={26} $w={26}><svg width="26" height="26" viewBox="0 0 26 26"><path d="M0 2.500h26M0 13h26M0 23.500h26" stroke="#505050" strokeWidth="4.500" /></svg></Slot>
          </NavBar>
          <Bookmarks>
            <Bookmark $w={365} $gap={14}><SiRedhatopenshift size={34} color="#dc3e42" />OpenShift web con…</Bookmark>
            <Bookmark $w={368} $gap={12}>
              <svg width="35" height="34" viewBox="0 0 34 34"><circle cx="17" cy="17" r="17" fill="#7a2cb8" /><g fill="none" stroke="#f1ddff" strokeWidth="2.500"><ellipse cx="17" cy="17" rx="12" ry="4.500" /><ellipse cx="17" cy="17" rx="4.500" ry="12" /><path d="M5 17h24M17 5v24" strokeWidth="1" /></g></svg>
              WebSphere Integra…
            </Bookmark>
            <Bookmark $w={365} $gap={8}>
              <svg width="34" height="34" viewBox="0 0 34 34"><path d="M17 0l7 15H10z" fill="#e0b23a" /><path d="M8 17l8 17H0z" fill="#4a9fd8" /><path d="M26 17l8 17H18z" fill="#58cf94" /><path d="M17 10l3 7 6 1-4 6 1 8-6-4-6 4 1-8-4-6 6-1z" fill="#f6fdf8" /></svg>
              Application Navigator
            </Bookmark>
            <Bookmark $w={295} $gap={7}>
              <svg width="33" height="34" viewBox="0 0 33 34"><rect width="33" height="34" fill="#252525" /><path d="M16.500 5l9 5v13l-9 6-9-6V10z" fill="#454545" stroke="#606060" /><path d="M12 22V13l4.500-2 4.500 2v9h-3v-6h-3v6z" fill="#222" /></svg>
              CP4A Dashboard
            </Bookmark>
            <Bookmark $w={581} $gap={12}>
              <svg width="34" height="24" viewBox="0 0 34 24"><ellipse cx="6.500" cy="14" rx="7" ry="5" transform="rotate(-30 6.500 14)" /><ellipse cx="27.500" cy="14" rx="7" ry="5" transform="rotate(30 27.500 14)" /><path d="M14 2h7M12 7h10M12 12h10M12 17h10M14 22h6" stroke="#000" strokeWidth="2.800" /></svg>
              IBM Transformation…
            </Bookmark>
            <Overflow $w={30} $gap={0}><svg width="28" height="26" viewBox="0 0 28 26"><path d="M2 1l11 12L2 25M14 1l11 12-11 12" stroke="#5a5a5a" strokeWidth="4" fill="none" /></svg></Overflow>
          </Bookmarks>
          <Masthead>
            <Burger><i /><i /><i /></Burger>
            <Slot $ml={52} $w={92}><KialiMark w={92} h={65} ring="#dff4fc" /></Slot>
            <Wordmark>kiali</Wordmark>
            <Bell><FaBell size={34} /></Bell>
            <Slot $ml={70} $w={35}><FaQuestionCircle size={35} /></Slot>
            <UserName>ibmadmin</UserName>
            <Caret $c="#f0f0f0" />
          </Masthead>
          <Page>
            <Row $ml={21}><Select $w={429} $caret={37}>Namespace: cloudlab<Caret /></Select></Row>
            <Caption>
              <Heading>Graph <Help /></Heading>
              <Range>Apr 22, 18:40:24 ... Apr 22, 18:50:24</Range>
            </Caption>
            <Row>
              <Select $w={268} $caret={37}>App graph<Caret /></Select>
              <Row $ml={22}><Select $w={425} $caret={38}>Requests per second<Caret /></Select></Row>
              <Row $ml={21}><Select $w={313} $caret={39} $focus>Display<Count>7</Count><Caret /></Select></Row>
              <Row $ml={21}>
                <Input $w={331} $muted>Find...</Input><Input $w={331}>name=unknown</Input>
                <ClearBtn $w={86}><FaTimes size={27} /></ClearBtn>
              </Row>
              <Row $ml={13}><Help /></Row>
            </Row>
            <Row $ml={1357}>
              <Select $w={248} $caret={38}>Last 10m<Caret /></Select>
              <Select $w={250} $caret={38}>Every 15s<Caret /></Select>
              <Refresh><FaSync size={33} /></Refresh>
            </Row>
            <Workspace>
              <Canvas>
                <Graph />
                {labels.map((l, i) => (
                  <Label key={i} $x={l.x} $y={l.y} $w={l.w} $h={l.h} $dark={l.dark} $route={l.route}>
                    {l.route && (
                      <RouteBadge><svg width="12" height="20" viewBox="0 0 12 20"><path d="M2 2v17M2 12q8 0 8-9M0 2h4M8 2h4" stroke="#e9e2ff" strokeWidth="2" fill="none" /></svg></RouteBadge>
                    )}
                    {l.t}
                  </Label>
                ))}
                <GraphTools>
                  <Tool $w={99} $ml={0}><Zoom plus /></Tool>
                  <Tool $w={99} $ml={2}><Zoom /></Tool>
                  <Tool $w={99} $ml={21}><Expand /></Tool>
                  <Tool $w={99} $ml={21}><Topology s={35} c="#4ba6dd" /></Tool>
                  <Tool $w={117} $ml={2}><Topology s={35} />1</Tool>
                  <Tool $w={124} $ml={3}><Topology s={35} />2</Tool>
                  <LegendBtn $w={180} $ml={21}>Legend</LegendBtn>
                </GraphTools>
                <HideTab><HideText>Hide</HideText><FaAngleDoubleRight size={26} /></HideTab>
              </Canvas>
              <Side>
                <SideBody>
                  <Summary>
                    <NsRow><Pill>NS</Pill>cloudlab<FaExclamationTriangle size={24} color="#e0aa3a" /></NsRow>
                    <Links><Windows /><ServiceIcon /><Bundle /><Registry /></Links>
                    <Strong>Current Graph:</Strong>
                    <Stat $h={42} $ls={0.1}><Windows />5 apps (5 versions)</Stat>
                    <Stat $h={30}><ServiceIcon />5 services</Stat>
                    <Stat $h={43} $ls={-0.4}><Topology s={26} />11 edges</Stat>
                  </Summary>
                  <TabRow>
                    <PanelTab $w={168} $on>Incoming</PanelTab><PanelTab $w={175}>Outgoing</PanelTab><PanelTab $w={106}>Total</PanelTab>
                  </TabRow>
                  <HttpTitle>HTTP (requests per second):</HttpTitle>
                  <Table>
                    <colgroup><col width="135" /><col width="213" /><col /></colgroup>
                    <thead><tr><th>Total</th><th>%Success</th><th>%Error</th></tr></thead>
                    <tbody><tr><td>0.92</td><td>100.00</td><td>0.00</td></tr></tbody>
                  </Table>
                  <Row $mt={62} $ml={30}><BarChart /></Row>
                </SideBody>
                <Track><Thumb /></Track>
              </Side>
            </Workspace>
          </Page>
        </Window>
      </Desktop>
    </>
  );
}
